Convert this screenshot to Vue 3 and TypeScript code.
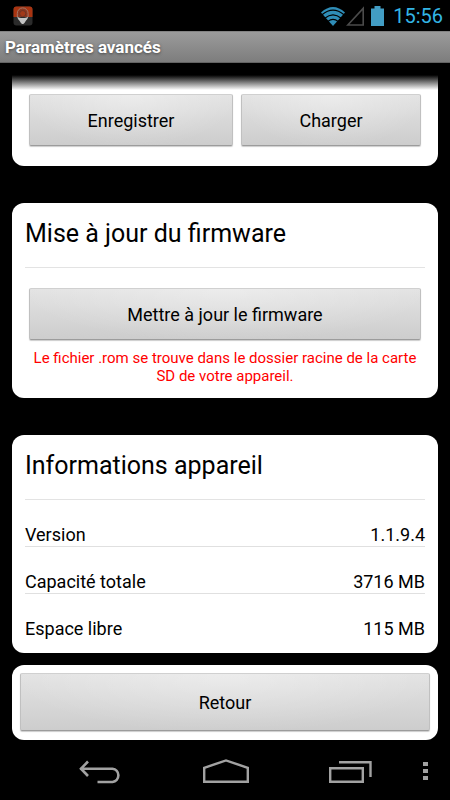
<script setup lang="ts">
interface InfoRow {
  label: string
  value: string
}

const infoRows: InfoRow[] = [
  { label: 'Version', value: '1.1.9.4' },
  { label: 'Capacité totale', value: '3716 MB' },
  { label: 'Espace libre', value: '115 MB' },
]
</script>

<template>
  <div class="screen">
    <div class="status-bar">
      <svg class="app-icon" width="20" height="20" viewBox="0 0 20 20" aria-hidden="true">
        <rect x="0.5" y="0.5" width="19" height="19" rx="3" fill="#2b2b2b" />
        <path d="M.5 11V3.500a3 3 0 0 1 3-3h13a3 3 0 0 1 3 3V11z" fill="#a93411" />
        <path d="M4.300 11V7.300a5.400 5.400 0 0 1 10.800 0V11z" fill="#8d3820" />
        <path d="M4.300 11V7.300a5.400 5.400 0 0 1 10.800 0V11" fill="none" stroke="#a37768" stroke-width="1" />
        <path d="M4.300 10.500c2 2 8.800 2 10.800 0 0 2.300-1.800 3.600-3 5.400-.9 1.600-1.500 2-2.400 2s-1.500-.4-2.400-2c-1.200-1.800-3-3.100-3-5.400z" fill="#c4c4c4" />
        <circle cx="9.700" cy="7.600" r="3.100" fill="#a23a1a" stroke="#6d3325" stroke-width="1" />
      </svg>
      <div class="status-right">
        <svg width="26" height="20" viewBox="0 0 26 20" aria-hidden="true">
          <path d="M1 6.500Q13-4.500 25 6.500L13 20z" fill="#2f8db7" />
          <path d="M2 8.700Q13-.5 24 8.700M4.800 12.200Q13 5.500 21.200 12.200M7.800 15.400Q13 11.400 18.200 15.400" fill="none" stroke="#000" stroke-width="1.200" />
        </svg>
        <svg width="19" height="20" viewBox="0 0 19 20" aria-hidden="true">
          <path d="M1.800 19L17.200 2.400V19z" fill="none" stroke="#4b4b4b" stroke-width="1.600" />
        </svg>
        <svg class="battery" width="13" height="20" viewBox="0 0 13 20" aria-hidden="true">
          <path d="M0 2.500h3.500V0h6v2.500H13V20H0z" fill="#429dc4" />
        </svg>
        <span class="clock">15:56</span>
      </div>
    </div>

    <header class="title-bar">
      <h1>Paramètres avancés</h1>
    </header>

    <main class="content">
      <section class="card card-scrolled">
        <div class="button-pair">
          <button type="button" class="btn">Enregistrer</button>
          <button type="button" class="btn">Charger</button>
        </div>
      </section>

      <section class="card">
        <h2>Mise à jour du firmware</h2>
        <div class="firmware">
          <button type="button" class="btn">Mettre à jour le firmware</button>
          <p>Le fichier .rom se trouve dans le dossier racine de la carte SD de votre appareil.</p>
        </div>
      </section>

      <section class="card">
        <h2>Informations appareil</h2>
        <table>
          <tbody>
            <tr v-for="row in infoRows" :key="row.label">
              <th scope="row">{{ row.label }}</th>
              <td>{{ row.value }}</td>
            </tr>
          </tbody>
        </table>
      </section>
    </main>

    <footer class="footer-card">
      <button type="button" class="btn btn-tall">Retour</button>
    </footer>

    <nav class="nav-bar">
      <div class="nav-main">
        <button type="button" class="nav-btn" aria-label="Précédent">
          <svg width="44" height="24" viewBox="0 0 44 24" fill="none" stroke="#a2a2a2" stroke-width="2.600">
            <path d="M2 8.700H34.500a6.700 6.700 0 0 1 0 13.300H19.500M10 1.500L3 8.700L10 16" />
          </svg>
        </button>
        <button type="button" class="nav-btn" aria-label="Accueil">
          <svg width="46" height="26" viewBox="0 0 46 26" fill="none" stroke="#a2a2a2" stroke-width="2.400">
            <path d="M1.200 8.800L23 1.400L44.800 8.800V22.800H1.200z" />
          </svg>
        </button>
        <button type="button" class="nav-btn" aria-label="Applications récentes">
          <svg width="43" height="22" viewBox="0 0 43 22" fill="none" stroke="#a2a2a2" stroke-width="2.400">
            <path d="M1.200 7.300H33.800V20.700H1.200zM10 1.300H41.500V16" />
          </svg>
        </button>
      </div>
      <button type="button" class="nav-btn nav-more" aria-label="Menu">
        <svg width="5" height="19" viewBox="0 0 5 19" fill="#a2a2a2">
          <path d="M0 1h5v4H0zM0 8h5v4H0zM0 15h5v4H0z" />
        </svg>
      </button>
    </nav>
  </div>
</template>

<style>
body {
  margin: 0;
  background: #000;
}
</style>

<style scoped>
.screen {
  box-sizing: border-box;
  min-height: 100vh;
  display: flex;
  flex-direction: column;
  background: #000;
  color: #000;
  font-family: Roboto, "Noto Sans", sans-serif;
  font-size: 18px;
}

.status-bar {
  height: 31px;
  display: flex;
  align-items: center;
  justify-content: space-between;
  padding: 0 7px 0 13px;
}

.app-icon,
.status-right svg {
  display: block;
}

.status-right {
  display: flex;
  align-items: center;
}

.battery {
  margin: 0 9px 0 6px;
}

.clock {
  color: #33b5e5;
  font-size: 20px;
  line-height: 32px;
}

.title-bar {
  box-sizing: border-box;
  height: 32px;
  padding: 0 5px;
  border-top: 1px solid #838383;
  border-bottom: 1px solid #636363;
  background: linear-gradient(#9b9b9b, #7d7d7d);
}

h1 {
  margin: 0;
  color: #fff;
  font-size: 17px;
  font-weight: 700;
  line-height: 31px;
  text-shadow: 0 1px 3px #444;
}

.content {
  flex: 1;
  display: flex;
  flex-direction: column;
  gap: 37px;
  padding: 12px 12px 0;
}

.card {
  padding: 0 13px 13px;
  border-radius: 12px;
  background: #fff;
}

.card-scrolled {
  padding: 19px 17px 20px;
  border-radius: 0 0 12px 12px;
  background: linear-gradient(#000, #fff 15px);
}

.button-pair {
  display: grid;
  grid-template-columns: 17fr 15fr;
  gap: 8px;
}

.btn {
  box-sizing: border-box;
  width: 100%;
  height: 52px;
  padding: 0;
  border: 1px solid #c0c0c0;
  border-top-color: #d0d0d0;
  border-bottom-color: #9c9c9c;
  border-radius: 2px;
  background: radial-gradient(ellipse at 50% 0, #ffffff55, #ffffff00 75%), linear-gradient(#e3e3e3, #cdcdcd);
  box-shadow: 0 1px 1px #ccc;
  color: #000;
  font-family: inherit;
  font-size: 18px;
}

.btn-tall {
  height: 58px;
}

h2 {
  margin: 0;
  padding-bottom: 2px;
  border-bottom: 1px solid #e3e3e3;
  font-size: 25px;
  font-weight: 400;
  line-height: 62px;
}

.firmware {
  padding: 20px 4px 0;
}

.firmware p {
  margin: 9px 0 0;
  color: #f00;
  font-size: 15px;
  line-height: 18px;
  text-align: center;
}

table {
  width: 100%;
  border-collapse: collapse;
}

th,
td {
  padding: 24px 0 1px;
  font-weight: 400;
  line-height: 21px;
  text-align: left;
}

td {
  text-align: right;
}

tr + tr {
  border-top: 1px solid #e0e0e0;
}

.footer-card {
  margin: 12px 12px 0;
  padding: 8px 8px 9px;
  border-radius: 12px;
  background: #fff;
}

.nav-bar {
  height: 60px;
  display: flex;
  align-items: center;
  gap: 51px;
  padding: 0 22px 0 78px;
}

.nav-main {
  flex: 1;
  display: flex;
  align-items: center;
  justify-content: space-between;
}

.nav-btn {
  padding: 4px 0 0;
  border: 0;
  background: none;
}

.nav-btn svg {
  display: block;
}

.nav-more {
  padding-top: 0;
}
</style>
